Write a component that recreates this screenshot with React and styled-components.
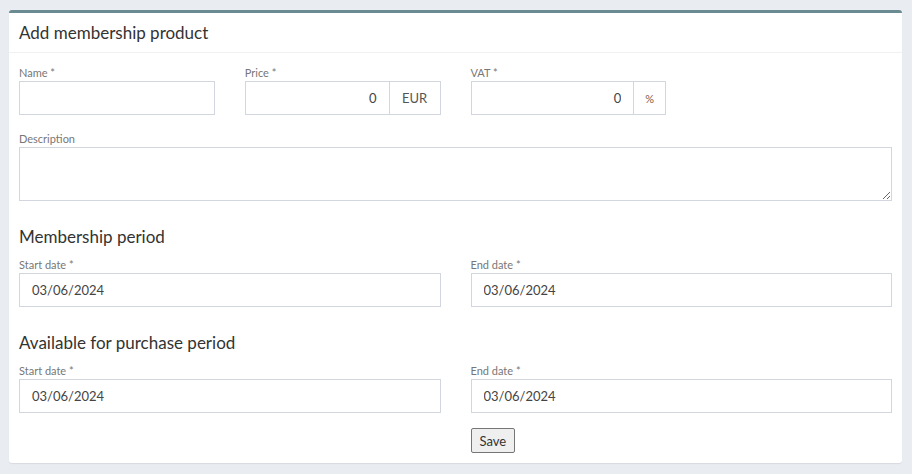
import React from "react";
import styled, { createGlobalStyle } from "styled-components";

const Global = createGlobalStyle`
  html, body { margin: 0; padding: 0; background: #e9ecf1; }
  body { font-family: "Lato", "Noto Sans", sans-serif; color: #333; }
  * { box-sizing: border-box; }
`;

const Page = styled.div`
  padding: 10px 10px 10px 9px;
`;

const Card = styled.section`
  background: #fff;
  border-top: 3px solid #6b8b92;
  border-radius: 3px;
  box-shadow: 0 1px 1px rgba(0, 0, 0, 0.08);
`;

const CardHeader = styled.header`
  height: 40px;
  padding: 0 10px;
  display: flex;
  align-items: center;
  border-bottom: 1px solid #f0f1f3;
`;

const Title = styled.h3`
  margin: 0;
  font-size: 17px;
  font-weight: 400;
  color: #333;
`;

const Body = styled.div`
  padding: 12px 10px 10px 10px;
`;

const Grid = styled.div`
  display: grid;
  grid-template-columns: repeat(4, 1fr);
  column-gap: 30px;
  row-gap: 16px;
`;

const Field = styled.div`
  display: flex;
  flex-direction: column;
  grid-column: span ${(p) => p.$span || 1};
`;

const Label = styled.label`
  font-size: 11px;
  color: #777;
  height: 16px;
  line-height: 16px;
`;

const Input = styled.input`
  height: 34px;
  width: 100%;
  border: 1px solid #d2d6de;
  padding: 0 12px;
  font: inherit;
  font-size: 13px;
  color: #444;
  text-align: ${(p) => (p.$right ? "right" : "left")};
  outline: none;
  background: #fff;
  border-radius: 0;
`;

const Group = styled.div`
  display: flex;
  height: 34px;
`;

const Addon = styled.span`
  width: ${(p) => p.$w}px;
  flex: none;
  border: 1px solid #d2d6de;
  border-left: none;
  display: flex;
  align-items: center;
  justify-content: center;
  font-size: ${(p) => (p.$small ? "11px" : "13px")};
  color: ${(p) => (p.$small ? "#8a5a44" : "#555")};
`;

const TextArea = styled.textarea`
  height: 54px;
  width: 100%;
  border: 1px solid #d2d6de;
  font: inherit;
  resize: vertical;
  outline: none;
  display: block;
`;

const Section = styled.h4`
  grid-column: 1 / -1;
  margin: 9px 0 -7px;
  font-size: 17px;
  font-weight: 400;
  color: #333;
  line-height: 22px;
`;

const Actions = styled.div`
  grid-column: 3 / span 2;
  margin-top: -1px;
`;

const Button = styled.button`
  font: inherit;
  font-size: 13px;
  color: #333;
  height: 25px;
  padding: 0 8px;
  background: #efefef;
  border: 1px solid #767676;
  border-radius: 2px;
  display: block;
`;

export default function App() {
  return (
    <>
      <Global />
      <Page>
        <Card>
          <CardHeader>
            <Title>Add membership product</Title>
          </CardHeader>
          <Body>
            <Grid>
              <Field>
                <Label>Name *</Label>
                <Input />
              </Field>
              <Field>
                <Label>Price *</Label>
                <Group>
                  <Input $right defaultValue="0" />
                  <Addon $w={51}>EUR</Addon>
                </Group>
              </Field>
              <Field>
                <Label>VAT *</Label>
                <Group>
                  <Input $right defaultValue="0" />
                  <Addon $w={32} $small>%</Addon>
                </Group>
              </Field>
              <div />
              <Field $span={4}>
                <Label>Description</Label>
                <TextArea />
              </Field>
              <Section>Membership period</Section>
              <Field $span={2}>
                <Label>Start date *</Label>
                <Input defaultValue="03/06/2024" />
              </Field>
              <Field $span={2}>
                <Label>End date *</Label>
                <Input defaultValue="03/06/2024" />
              </Field>
              <Section>Available for purchase period</Section>
              <Field $span={2}>
                <Label>Start date *</Label>
                <Input defaultValue="03/06/2024" />
              </Field>
              <Field $span={2}>
                <Label>End date *</Label>
                <Input defaultValue="03/06/2024" />
              </Field>
              <Actions>
                <Button>Save</Button>
              </Actions>
            </Grid>
          </Body>
        </Card>
      </Page>
    </>
  );
}
